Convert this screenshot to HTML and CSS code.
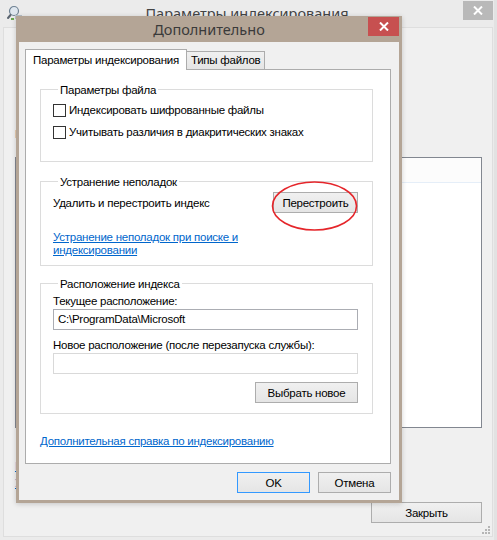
FILE: index.html
```html
<!DOCTYPE html>
<html lang="ru">
<head>
<meta charset="utf-8">
<title>Дополнительно</title>
<link rel="stylesheet" href="styles.css">
</head>
<body>
<div class="bgwin">
  <div class="bg-title">
    <svg class="bg-icon" width="17" height="16" viewBox="0 0 17 16">
      <circle cx="8" cy="6" r="4.5" fill="#dfe7ef" stroke="#6f8293" stroke-width="1.2"/>
      <path d="M4.5 10 L2 13" stroke="#5b6570" stroke-width="2" stroke-linecap="round"/>
      <rect x="9" y="10" width="7" height="4" fill="#b8c1c9"/>
      <rect x="5" y="13" width="3" height="2" fill="#6aa84f"/>
    </svg>
    <span class="bg-title-text">Параметры индексирования</span>
    <span class="bg-close">
      <svg width="10" height="9" viewBox="0 0 10 9"><path d="M1 0.5 L9 8.5 M9 0.5 L1 8.5" stroke="#fff" stroke-width="2"/></svg>
    </span>
  </div>
  <div class="bg-body">
    <div class="bg-status"></div>
    <div class="bg-label">Индексировать:</div>
    <div class="bg-list">
      <div class="bg-list-head"></div>
    </div>
    <div class="bg-links">
      <a class="link">Как?</a>
      <a class="link">Устранение</a>
    </div>
    <div class="bg-actions"><button class="btn btn-close">Закрыть</button></div>
    <svg class="grip" width="8" height="8" viewBox="0 0 8 8">
      <rect x="6" y="0" width="2" height="2" fill="#b5b5b5"/>
      <rect x="3" y="3" width="2" height="2" fill="#b5b5b5"/>
      <rect x="6" y="3" width="2" height="2" fill="#b5b5b5"/>
      <rect x="0" y="6" width="2" height="2" fill="#b5b5b5"/>
      <rect x="3" y="6" width="2" height="2" fill="#b5b5b5"/>
      <rect x="6" y="6" width="2" height="2" fill="#b5b5b5"/>
    </svg>
  </div>
</div>

<div class="dlg">
  <div class="dlg-title">
    <span>Дополнительно</span>
    <span class="dlg-close">
      <svg width="10" height="9" viewBox="0 0 10 9"><path d="M1 0.5 L9 8.5 M9 0.5 L1 8.5" stroke="#fff" stroke-width="2"/></svg>
    </span>
  </div>
  <div class="client">
    <div class="tabs">
      <div class="tab tab-active">Параметры индексирования</div>
      <div class="tab">Типы файлов</div>
    </div>
    <div class="panel">
      <div class="group g1">
        <div class="group-label">Параметры файла</div>
        <div class="check-row"><span class="cb"></span><span>Индексировать шифрованные файлы</span></div>
        <div class="check-row"><span class="cb"></span><span>Учитывать различия в диакритических знаках</span></div>
      </div>

      <div class="group g2">
        <div class="group-label">Устранение неполадок</div>
        <div class="rebuild-row">
          <span>Удалить и перестроить индекс</span>
          <span class="btn-wrap">
            <button class="btn btn-rebuild">Перестроить</button>
            <svg class="ring" width="88" height="52" viewBox="0 0 88 52">
              <ellipse cx="43.5" cy="25" rx="42" ry="24" fill="none" stroke="#e5262b" stroke-width="1.6"/>
            </svg>
          </span>
        </div>
        <a class="link trouble-link">Устранение неполадок при поиске и<br>индексировании</a>
      </div>

      <div class="group g3">
        <div class="group-label">Расположение индекса</div>
        <div class="field-label">Текущее расположение:</div>
        <div class="textbox">C:\ProgramData\Microsoft</div>
        <div class="field-label field-label-2">Новое расположение (после перезапуска службы):</div>
        <div class="textbox textbox-disabled"></div>
        <div class="g3-actions"><button class="btn btn-select">Выбрать новое</button></div>
      </div>

      <a class="link help-link">Дополнительная справка по индексированию</a>
    </div>
    <div class="dlg-buttons">
      <button class="btn btn-ok">OK</button>
      <button class="btn">Отмена</button>
    </div>
  </div>
</div>
</body>
</html>
```

FILE: styles.css
```css
* { box-sizing: border-box; }

html, body {
  margin: 0;
  padding: 0;
}

body {
  width: 497px;
  height: 540px;
  overflow: hidden;
  position: relative;
  font-family: "Liberation Sans", Arial, sans-serif;
  font-size: 11.5px;
  letter-spacing: -0.25px;
  color: #000;
  background: #ebebeb;
}

/* ---------- background window ---------- */
.bgwin {
  width: 497px;
  height: 540px;
  display: flex;
  flex-direction: column;
  background: #ebebeb;
  border-right: 3px solid #e2e2e2;
}

.bg-title {
  height: 27px;
  position: relative;
  text-align: center;
  line-height: 27px;
  font-family: "Noto Sans", "Open Sans", sans-serif;
  font-size: 14.5px;
  letter-spacing: 0;
  color: #444;
}

.bg-icon {
  position: absolute;
  left: 6px;
  top: 5px;
}

.bg-close {
  position: absolute;
  right: 1px;
  top: 1px;
  width: 30px;
  height: 19px;
  background: #b9b9b9;
  display: flex;
  align-items: center;
  justify-content: center;
}

.bg-body {
  flex: 1;
  margin: 0 1px 3px 3px;
  background: #f0f0f0;
  border: 1px solid #dedede;
  padding: 0 10px 0 11px;
  display: flex;
  flex-direction: column;
  position: relative;
}

.bg-status {
  height: 98px;
}

.bg-label {
  line-height: 16px;
  color: #1e1e5a;
  align-self: flex-start;
}

.bg-list {
  margin-top: 15px;
  height: 271px;
  border: 1px solid #828790;
  background: #fff;
}

.bg-list-head {
  height: 25px;
  background: #fcfcfc;
  border-bottom: 1px solid #e5eef8;
}

.bg-links {
  margin-top: 30px;
  display: flex;
  flex-direction: column;
  align-items: flex-start;
  line-height: 16px;
  gap: 1px;
}

.bg-actions {
  margin-top: 11px;
  display: flex;
  justify-content: flex-end;
}

.grip {
  position: absolute;
  right: 2px;
  bottom: 2px;
}

/* ---------- common controls ---------- */
.link {
  color: #0066cc;
  text-decoration: underline;
  cursor: pointer;
}

.btn {
  font-family: inherit;
  font-size: 11.5px;
  letter-spacing: -0.25px;
  color: #000;
  height: 21px;
  padding: 0 6px;
  border: 1px solid #adadad;
  background: linear-gradient(#f0f0f0, #e5e5e5);
  line-height: 18px;
  margin: 0;
}

.btn-close {
  width: 111px;
}

/* ---------- dialog ---------- */
.dlg {
  position: absolute;
  left: 16px;
  top: 16px;
  width: 386px;
  height: 487px;
  background: #b4a596;
  padding: 0 3px 3px 3px;
  display: flex;
  flex-direction: column;
  box-shadow: 0 1px 5px rgba(0, 0, 0, 0.18);
}

.dlg-title {
  height: 26px;
  position: relative;
  text-align: center;
  font-family: "Noto Sans", "Open Sans", sans-serif;
  font-size: 14.5px;
  letter-spacing: 0;
  line-height: 27px;
  color: #3a3a3a;
}

.dlg-close {
  position: absolute;
  right: 0;
  top: 1px;
  width: 31px;
  height: 19px;
  background: #c75050;
  display: flex;
  align-items: center;
  justify-content: center;
}

.client {
  flex: 1;
  background: #f0f0f0;
  padding: 7px 8px 0 6px;
  display: flex;
  flex-direction: column;
}

.tabs {
  height: 21px;
  display: flex;
  align-items: flex-end;
}

.tab {
  height: 18px;
  margin-bottom: 1px;
  margin-left: -1px;
  padding: 0 4px;
  border: 1px solid #acacac;
  border-bottom: none;
  background: linear-gradient(#f0f0f0, #e5e5e5);
  line-height: 17px;
}

.tab-active {
  height: 21px;
  margin-bottom: 0;
  margin-left: 0;
  padding: 0 7px;
  background: #fff;
  line-height: 20px;
  position: relative;
  z-index: 1;
}

.panel {
  margin-top: -1px;
  height: 395px;
  border: 1px solid #acacac;
  background: #fff;
  padding: 19px 17px 0 14px;
  display: flex;
  flex-direction: column;
}

.group {
  border: 1px solid #dcdcdc;
  display: flex;
  flex-direction: column;
  align-items: flex-start;
}

.group-label {
  margin: -8px 0 0 5px;
  padding: 0 2px;
  line-height: 16px;
  background: #fff;
}

.g1 {
  padding: 0 12px 19px 12px;
}

.check-row {
  display: flex;
  align-items: center;
  gap: 3px;
  height: 20px;
  margin-top: 2px;
}

.check-row:first-of-type {
  margin-top: 1px;
}

.cb {
  width: 13px;
  height: 13px;
  border: 1px solid #333;
  background: #fff;
}

.g2 {
  margin-top: 19px;
  padding: 0 14px 8px 12px;
}

.rebuild-row {
  align-self: stretch;
  display: flex;
  justify-content: space-between;
  align-items: center;
  margin-top: 2px;
}

.btn-wrap {
  position: relative;
  display: flex;
}

.btn-rebuild {
  width: 85px;
}

.ring {
  position: absolute;
  left: -2px;
  top: -11px;
  pointer-events: none;
}

.trouble-link {
  margin-top: 18px;
  line-height: 13px;
}

.g3 {
  margin-top: 17px;
  padding: 0 14px 10px 12px;
  align-items: stretch;
}

.g3 .group-label {
  align-self: flex-start;
}

.field-label {
  line-height: 16px;
  margin-top: 1px;
}

.field-label-2 {
  margin-top: 7px;
}

.textbox {
  height: 21px;
  border: 1px solid #abadb3;
  background: #fff;
  padding-left: 4px;
  line-height: 19px;
}

.textbox-disabled {
  border-color: #d9d9d9;
}

.g3-actions {
  margin-top: 8px;
  display: flex;
  justify-content: flex-end;
}

.btn-select {
  width: 103px;
}

.help-link {
  margin-top: 19px;
  line-height: 16px;
  align-self: flex-start;
}

.dlg-buttons {
  margin-top: 8px;
  display: flex;
  justify-content: flex-end;
  gap: 8px;
  padding-right: 0;
}

.dlg-buttons .btn {
  width: 73px;
}

.btn-ok {
  border-color: #3399ff;
}
```
